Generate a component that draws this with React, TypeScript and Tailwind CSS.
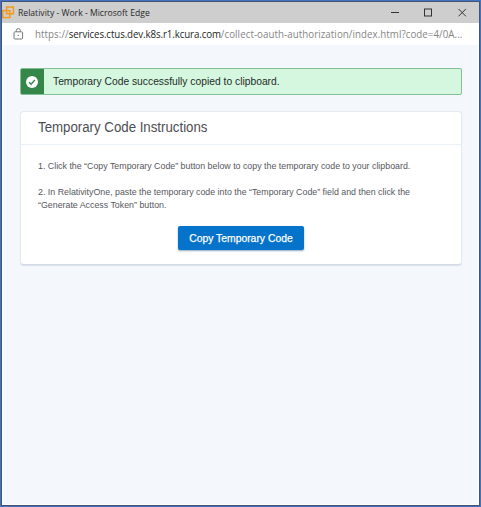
function BrandIcon() {
  return (
    <svg className="block h-[13px] w-[13px] shrink-0" viewBox="0 0 13 13" fill="none" stroke="#f39a1f" strokeWidth="1.5">
      <rect x="4.6" y="1" width="6.8" height="6.8" />
      <rect x="0.8" y="4.6" width="7" height="7" />
    </svg>
  );
}

function TitleBar() {
  return (
    <header className="flex h-[21px] shrink-0 items-center bg-[#cecece]">
      <BrandIcon />
      <h1 className="ml-[2.6px] w-[132px] origin-left scale-x-[0.898] whitespace-nowrap font-['Open_Sans','Noto_Sans',sans-serif] text-[9.6px] leading-[21px] text-[#292929]">
        Relativity - Work - Microsoft Edge
      </h1>
      <svg className="ml-auto mr-[11px] block h-[11px] w-[78px]" viewBox="0 0 78 11" fill="none" stroke="#333" strokeWidth="1">
        <path d="M1 5.5h8" />
        <rect x="34.5" y="2" width="7" height="7" />
        <path d="M68.5 1.9l7.4 7.4M75.9 1.9l-7.4 7.4" />
      </svg>
    </header>
  );
}

function AddressBar() {
  return (
    <div className="flex h-[22px] shrink-0 items-center bg-white pl-[11px]">
      <svg className="block h-[12px] w-[11px] shrink-0" viewBox="0 0 11 12" fill="none" stroke="#777" strokeWidth="1">
        <rect x="1" y="3.8" width="8.6" height="7.2" rx="1" />
        <path d="M3.3 3.8V2.6a2 2 0 0 1 4 0v1.2" />
        <circle cx="5.3" cy="7.4" r=".7" fill="#777" stroke="none" />
      </svg>
      <p className="ml-[10.6px] w-[430px] origin-left scale-x-[0.854] whitespace-nowrap font-['Open_Sans','Noto_Sans',sans-serif] text-[11.4px] leading-[22px] tracking-[0.07px] text-[#858585]">
        https://<span className="tracking-[-0.13px] text-[#242424]">services.ctus.dev.k8s.r1.kcura.com</span>/collect-oauth-authorization/index.html?code=4/0A...
      </p>
    </div>
  );
}

function SuccessBanner() {
  return (
    <div className="flex h-[27px] overflow-hidden rounded-[2px] border border-[#83bf94] bg-[#d5f7e0]">
      <div className="-my-px -ml-px flex w-6 shrink-0 items-center justify-center bg-[#358649]">
        <svg className="block h-3 w-3" viewBox="0 0 12 12">
          <circle cx="6" cy="6" r="6" fill="#fff" />
          <path d="M3.1 6.2l2 2 3.8-4.1" fill="none" stroke="#358649" strokeWidth="1.4" />
        </svg>
      </div>
      <p className="ml-[9px] origin-left scale-x-[0.936] whitespace-nowrap text-[11px] leading-[25px] text-[#242b27]">
        Temporary Code successfully copied to clipboard.
      </p>
    </div>
  );
}

export default function App() {
  return (
    <div className="flex h-[507px] w-[481px] bg-[#4272c4] p-px font-['Liberation_Sans',Arial,sans-serif]">
      <div className="flex min-w-0 flex-1 flex-col border border-[#44566f] bg-[#f4f8fc]">
        <TitleBar />
        <AddressBar />
        <main className="flex-1 border-x border-b border-white pl-[17px] pr-[16.5px] pt-[23px]">
          <SuccessBanner />
          <section className="mt-4 h-[154px] rounded-[4px] border border-[#e4ebf3] border-b-[#d3dbe6] bg-white shadow-[0_1px_1px_#d7dfeb]">
            <h2 className="h-[33px] whitespace-nowrap border-b border-[#e9f0f6] pl-[17px] text-[14px] leading-[31px] text-[#4b4e53]">
              <span className="inline-block origin-left scale-x-[0.947]">Temporary Code Instructions</span>
            </h2>
            <div className="whitespace-nowrap pl-[17px] pt-[15px] text-[8.84px] leading-[13px] text-[#55585d]">
              <p>1. Click the “Copy Temporary Code” button below to copy the temporary code to your clipboard.</p>
              <p className="mt-[13px]">
                2. In RelativityOne, paste the temporary code into the “Temporary Code” field and then click the
                <br />
                “Generate Access Token” button.
              </p>
            </div>
            <button className="mx-auto mt-[14px] flex h-6 w-[126px] items-center justify-center whitespace-nowrap rounded-[2px] bg-[#0573c9] text-[11px] leading-6 text-white shadow-[0_1px_2px_#8fa7c2] [-webkit-text-stroke:0.25px_white]">
              <span className="block scale-x-[0.942]">Copy Temporary Code</span>
            </button>
          </section>
        </main>
      </div>
    </div>
  );
}
